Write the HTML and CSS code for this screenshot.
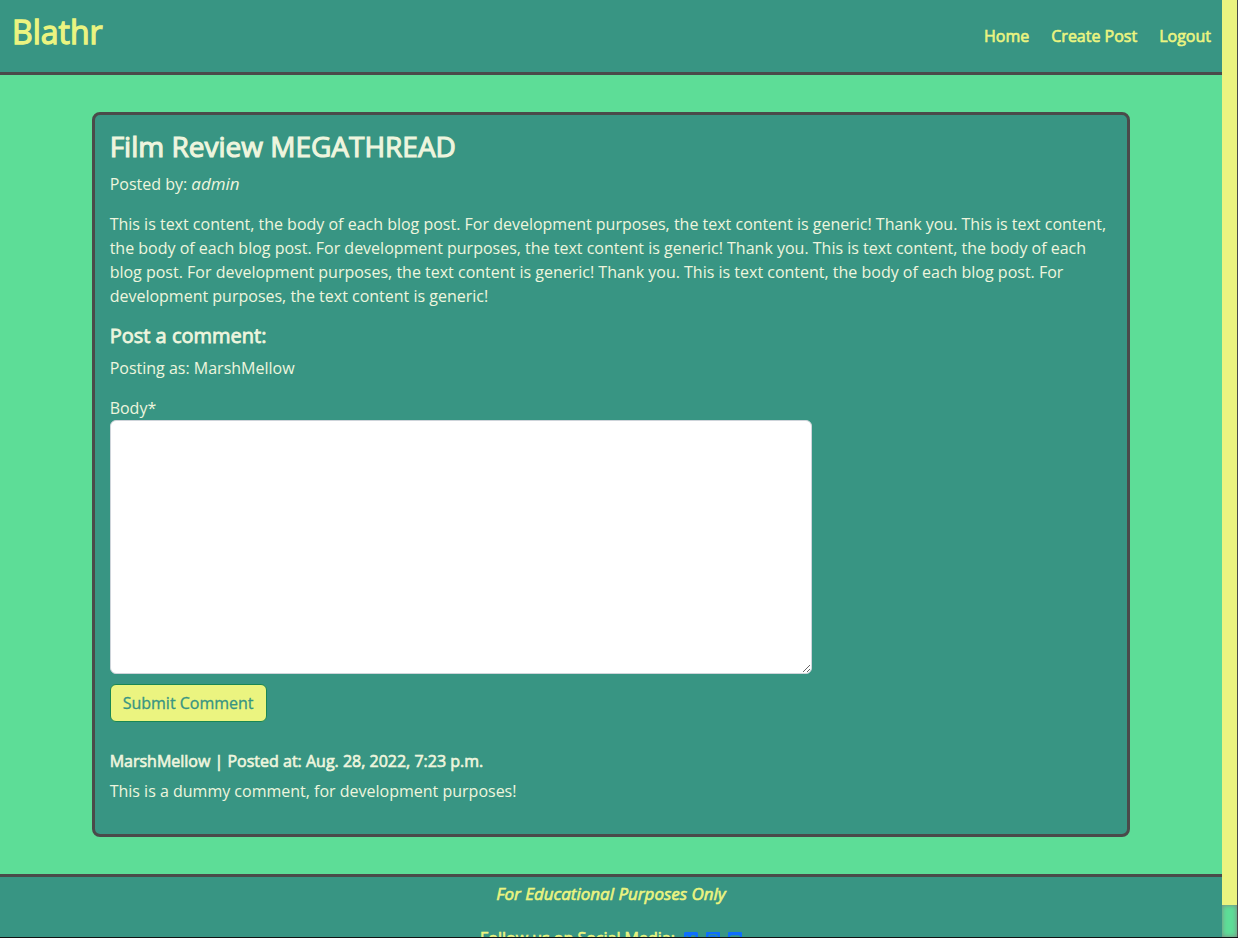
FILE: index.html
```html
<!DOCTYPE html>
<html lang="en">
<head>
<meta charset="utf-8">
<title>Blathr</title>
<link rel="stylesheet" href="styles.css">
</head>
<body>
<div class="window">
  <div class="page">
    <header class="navbar">
      <a class="brand strong" href="#">Blathr</a>
      <nav class="nav-links strong">
        <a href="#">Home</a>
        <a href="#">Create Post</a>
        <a href="#">Logout</a>
      </nav>
    </header>
    <main class="content">
      <article class="card">
        <h1 class="post-title strong">Film Review MEGATHREAD</h1>
        <p>Posted by: <em>admin</em></p>
        <p>This is text content, the body of each blog post. For development purposes, the text content is generic! Thank you. This is text content, the body of each blog post. For development purposes, the text content is generic! Thank you. This is text content, the body of each blog post. For development purposes, the text content is generic! Thank you. This is text content, the body of each blog post. For development purposes, the text content is generic!</p>
        <h2 class="form-title strong">Post a comment:</h2>
        <p>Posting as: MarshMellow</p>
        <form class="comment-form">
          <label for="body">Body*</label>
          <textarea id="body" name="body" rows="10"></textarea>
          <button type="submit">Submit Comment</button>
        </form>
        <section class="comment">
          <h3 class="comment-title strong">MarshMellow | Posted at: Aug. 28, 2022, 7:23 p.m.</h3>
          <p>This is a dummy comment, for development purposes!</p>
        </section>
      </article>
    </main>
    <footer class="footer strong">
      <p><em>For Educational Purposes Only</em></p>
      <p class="social">
        <span>Follow us on Social Media:</span>
        <a href="#" aria-label="Twitter"><svg viewBox="0 0 448 512"><path d="M400 32H48C21.500 32 0 53.500 0 80v352c0 26.500 21.500 48 48 48h352c26.500 0 48-21.500 48-48V80c0-26.500-21.500-48-48-48zm-48.900 158.800c.2 2.800.2 5.700.2 8.500 0 86.700-66 186.600-186.600 186.600-37.200 0-71.700-10.800-100.700-29.400 5.300.6 10.400.8 15.800.8 30.700 0 58.900-10.400 81.400-28-28.800-.6-53-19.500-61.300-45.500 10.100 1.500 19.200 1.500 29.600-1.200-30-6.100-52.500-32.500-52.500-64.400v-.8c8.700 4.900 18.900 7.900 29.600 8.300a65.447 65.447 0 0 1-29.200-54.600c0-12.200 3.200-23.400 8.900-33.100 32.300 39.800 80.800 65.800 135.200 68.600-9.300-44.500 24-80.600 64-80.600 18.900 0 35.900 7.900 47.900 20.700 14.800-2.800 29-8.300 41.600-15.800-4.900 15.200-15.200 28-28.800 36.100 13.200-1.400 26-5.100 37.800-10.200-8.900 13.100-20.100 24.700-32.900 34z"/></svg></a>
        <a href="#" aria-label="Instagram"><svg viewBox="0 0 14 16"><path fill-rule="evenodd" d="M1 1h12a1 1 0 0 1 1 1v12a1 1 0 0 1-1 1H1a1 1 0 0 1-1-1V2a1 1 0 0 1 1-1zM4.500 3.200A2 2 0 0 0 2.500 5.200v5.600a2 2 0 0 0 2 2h5a2 2 0 0 0 2-2V5.200a2 2 0 0 0-2-2zM5 4.200h4a1.500 1.500 0 0 1 1.500 1.500v4.600A1.500 1.500 0 0 1 9 11.800H5a1.500 1.500 0 0 1-1.500-1.500V5.700A1.500 1.500 0 0 1 5 4.200zM7 5.700a2.300 2.300 0 1 0 0 4.600 2.300 2.300 0 0 0 0-4.600z"/></svg></a>
        <a href="#" aria-label="YouTube"><svg viewBox="0 0 14 16"><path fill-rule="evenodd" d="M1 1h12a1 1 0 0 1 1 1v12a1 1 0 0 1-1 1H1a1 1 0 0 1-1-1V2a1 1 0 0 1 1-1zM3.500 4.300A1.500 1.500 0 0 0 2 5.800v4.400a1.500 1.500 0 0 0 1.500 1.500h7a1.500 1.500 0 0 0 1.500-1.500V5.800a1.500 1.500 0 0 0-1.500-1.500zM6 6l3.500 2L6 10z"/></svg></a>
      </p>
    </footer>
  </div>
  <div class="scroll-track" aria-hidden="true"><div class="scroll-thumb"></div><div class="scroll-rest"></div></div>
</div>
</body>
</html>
```
FILE: styles.css
```css
* { box-sizing: border-box; }

body {
  margin: 0;
  background: #5ddd97;
  color: #eef5de;
  font: 16px/24px "Open Sans", "Noto Sans", sans-serif;
}

a { color: inherit; text-decoration: none; }
p { margin: 0 0 16px; }
em { font-size: 17px; font-style: oblique; line-height: 20px; }

.strong {
  font-weight: 400;
  -webkit-text-stroke: 0.04em currentColor;
}

.window {
  display: flex;
  height: 100vh;
  border-bottom: 1px solid #101414;
}

.page {
  flex: 1;
  min-width: 0;
  overflow: hidden;
}

.navbar {
  display: flex;
  justify-content: space-between;
  align-items: center;
  padding: 0 11px 0 12px;
  background: #389583;
  border-bottom: 3px solid #4a4a4a;
  color: #ebf480;
}

.brand { padding: 8px 0 16px; font-size: 32px; line-height: 48px; }
.nav-links { display: flex; gap: 22px; }

.content { padding: 37px 0; }

.card {
  width: 85%;
  margin: 0 auto;
  padding: 15px;
  background: #389583;
  border: 3px solid #4a4a4a;
  border-radius: 8px;
}

.post-title { margin: 0 0 10px; font-size: 28px; line-height: 32px; }
.form-title { margin: 0 0 8px; font-size: 20px; line-height: 24px; }
.comment-title { margin: 0 0 8px; font-size: 16px; line-height: 19px; }

.comment-form {
  display: flex;
  flex-direction: column;
  align-items: flex-start;
}

.comment-form textarea {
  width: 70%;
  height: 254px;
  padding: 6px 12px;
  border: 1px solid #ced4da;
  border-radius: 6px;
  background: #fff;
  font: inherit;
  resize: vertical;
}

.comment-form button {
  margin-top: 10px;
  padding: 6px 12px;
  background: #ebf480;
  border: 1px solid #198754;
  border-radius: 6px;
  color: #389583;
  font: inherit;
  -webkit-text-stroke: 0.02em currentColor;
}

.comment { margin-top: 30px; }

.footer {
  padding: 5px 0 16px;
  background: #389583;
  border-top: 3px solid #4a4a4a;
  color: #ebf480;
  text-align: center;
}

.footer p { margin-bottom: 20px; }

.social {
  display: flex;
  justify-content: center;
  gap: 8px;
}

.social span { margin-right: 1px; }
.social a { color: #0d6efd; }
.social svg {
  display: block;
  width: 14px;
  height: 16px;
  margin-top: 5px;
  fill: currentColor;
  stroke: none;
}

.scroll-track {
  display: flex;
  flex-direction: column;
  width: 16px;
  border-right: 1px solid #4a4a4a;
}

.scroll-thumb { flex: 1; background: #ebf480; }
.scroll-rest { height: 32px; box-shadow: inset 0 0 5px #808080; }
```
